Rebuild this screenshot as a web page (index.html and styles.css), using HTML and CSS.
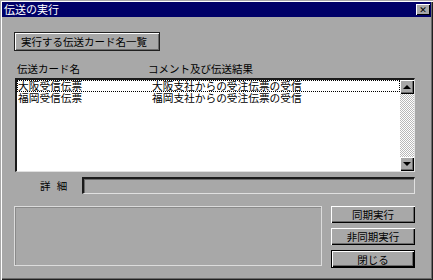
FILE: index.html
```html
<!DOCTYPE html>
<html lang="ja">
<head>
    <meta charset="UTF-8">
    <title>伝送の実行</title>
    <link rel="stylesheet" href="styles.css">
</head>
<body>
    <div class="window">
        <!-- Title bar -->
        <div class="titlebar">
            <span class="title">伝送の実行</span>
            <span class="close-btn">✕</span>
        </div>

        <div class="content">
            <div class="caption-btn">実行する伝送カード名一覧</div>

            <div class="list-head">
                <span class="col-name">伝送カード名</span>
                <span class="col-comment">コメント及び伝送結果</span>
            </div>

            <!-- Card list -->
            <div class="listbox">
                <div class="rows">
                    <div class="row focus">
                        <span class="col-name">大阪受信伝票</span>
                        <span class="col-comment">大阪支社からの受注伝票の受信</span>
                    </div>
                    <div class="row">
                        <span class="col-name">福岡受信伝票</span>
                        <span class="col-comment">福岡支社からの受注伝票の受信</span>
                    </div>
                </div>
                <div class="scrollbar">
                    <div class="sb-btn"><span class="arrow up"></span></div>
                    <div class="sb-track"></div>
                    <div class="sb-btn"><span class="arrow down"></span></div>
                </div>
            </div>

            <div class="detail-row">
                <span class="detail-label">詳 細</span>
                <div class="detail-field"></div>
            </div>

            <div class="bottom">
                <div class="panel"></div>
                <div class="actions">
                    <button class="btn">同期実行</button>
                    <button class="btn">非同期実行</button>
                    <button class="btn default">閉じる</button>
                </div>
            </div>
        </div>
    </div>
</body>
</html>
```

FILE: styles.css
```css
* {
    margin: 0;
    padding: 0;
    box-sizing: border-box;
}

body {
    background: #a8a8a8;
    font-family: "Noto Sans CJK JP", "DejaVu Sans", sans-serif;
    font-size: 10.5px;
    color: #000;
}

.window {
    width: 433px;
    height: 280px;
    padding: 2px;
    background: #a8a8a8;
    box-shadow: inset 1px 1px 0 #a8a8a8, inset 2px 2px 0 #ffffff,
        inset -1px -1px 0 #202020, inset -2px -2px 0 #6a6a6a;
}

.titlebar {
    height: 15px;
    background: #000068;
    color: #fff;
    display: flex;
    align-items: center;
    justify-content: space-between;
    padding: 0 1px 0 2px;
}

.title {
    line-height: 15px;
    font-size: 11px;
}

.close-btn {
    width: 14px;
    height: 11px;
    background: #a8a8a8;
    color: #000;
    font-size: 9px;
    font-weight: bold;
    line-height: 11px;
    text-align: center;
    box-shadow: inset 1px 1px 0 #fff, inset -1px -1px 0 #000;
}

.content {
    padding: 15px 0 0 12px;
}

.caption-btn {
    width: 146px;
    height: 19px;
    line-height: 17px;
    padding-left: 6px;
    font-size: 10.5px;
    border: 1px solid #202020;
    box-shadow: inset 1px 1px 0 #fff, inset -1px -1px 0 #6a6a6a;
}

.list-head {
    display: flex;
    margin-top: 11px;
    height: 13px;
    line-height: 13px;
    padding-left: 3px;
}

.col-name {
    width: 131px;
}

.listbox {
    margin: 3px 0 0 1px;
    width: 400px;
    height: 94px;
    display: flex;
    background: #fff;
    border-style: solid;
    border-width: 2px 1px 1px 2px;
    border-color: #1a1a1a #e0e0e0 #e0e0e0 #1a1a1a;
}

.rows {
    flex: 1;
}

.row {
    display: flex;
    height: 12px;
    line-height: 12px;
    padding-left: 1px;
    font-size: 10.7px;
}

.row .col-name {
    width: 134px;
}

.row.focus {
    outline: 1px dotted #000;
    outline-offset: -1px;
}

.scrollbar {
    width: 14px;
    display: flex;
    flex-direction: column;
}

.sb-btn {
    height: 14px;
    background: #a8a8a8;
    display: flex;
    align-items: center;
    justify-content: center;
    box-shadow: inset 1px 1px 0 #fff, inset -1px -1px 0 #000, inset -2px -2px 0 #6a6a6a;
}

.sb-track {
    flex: 1;
    background: repeating-conic-gradient(#ffffff 0 25%, #b8b8b8 0 50%) 0 0 / 2px 2px;
}

.arrow {
    width: 0;
    height: 0;
    border-left: 4px solid transparent;
    border-right: 4px solid transparent;
}

.arrow.up {
    border-bottom: 4px solid #000;
}

.arrow.down {
    border-top: 4px solid #000;
}

.detail-row {
    display: flex;
    align-items: center;
    margin-top: 5px;
}

.detail-label {
    width: 68px;
    padding-left: 26px;
    letter-spacing: 2px;
}

.detail-field {
    width: 333px;
    height: 17px;
    border-style: solid;
    border-width: 2px 1px 1px 2px;
    border-color: #1a1a1a #e0e0e0 #e0e0e0 #1a1a1a;
    box-shadow: inset 1px 1px 0 #6a6a6a;
}

.bottom {
    display: flex;
    margin-top: 12px;
    gap: 9px;
}

.panel {
    width: 308px;
    height: 60px;
    border: 1px solid #dcdcdc;
    box-shadow: inset 1px 1px 0 #8a8a8a;
}

.actions {
    display: flex;
    flex-direction: column;
    gap: 5px;
}

.btn {
    width: 84px;
    height: 17px;
    background: #a8a8a8;
    border: none;
    font-family: inherit;
    font-size: 10.5px;
    color: #000;
    box-shadow: inset 1px 1px 0 #fff, inset -1px -1px 0 #000, inset -2px -2px 0 #6a6a6a;
}

.btn.default {
    height: 18px;
    border: 1px solid #000;
}
```
